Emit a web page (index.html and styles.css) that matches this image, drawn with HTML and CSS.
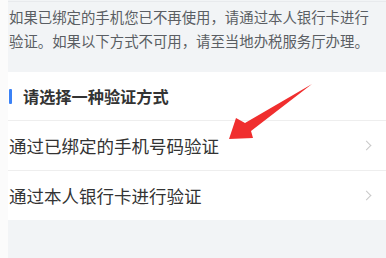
FILE: index.html
```html
<!DOCTYPE html>
<html lang="zh">
<head>
<meta charset="utf-8">
<link rel="stylesheet" href="styles.css">
</head>
<body>
<div class="page">
  <div class="notice">
    <p>如果已绑定的手机您已不再使用，请通过本人银行卡进行验证。如果以下方式不可用，请至当地办税服务厅办理。</p>
  </div>
  <div class="card">
    <div class="title"><span class="bar"></span><span>请选择一种验证方式</span></div>
    <div class="row"><span>通过已绑定的手机号码验证</span><span class="chev"></span></div>
    <div class="row"><span>通过本人银行卡进行验证</span><span class="chev"></span></div>
  </div>
  <div class="rest"></div>
</div>
<svg class="arrow" width="386" height="258" viewBox="0 0 386 258">
  <polygon points="229,139 236,118 245,123 312,84 251,131 253,138" fill="#f02e2e"/>
</svg>
</body>
</html>
```

FILE: styles.css
```css
html, body {
  margin: 0;
  padding: 0;
  background: #fbfbfb;
  font-family: "Noto Sans CJK SC", "Noto Sans", sans-serif;
}
.page {
  margin-left: 8px;
  padding-top: 1px;
  height: 257px;
  display: flex;
  flex-direction: column;
  background: #f2f4f6;
}
.notice {
  border-top: 1px solid #e8eaed;
  height: 70px;
}
.notice p {
  margin: 0;
  padding: 3px 16px 0 1px;
  font-size: 14.4px;
  line-height: 24px;
  color: #5a5e63;
  letter-spacing: 0;
}
.card {
  background: #fff;
}
.title {
  display: flex;
  align-items: center;
  height: 48px;
  border-bottom: 1px solid #eeeeee;
  font-size: 16.2px;
  font-weight: bold;
  color: #333;
}
.bar {
  width: 3px;
  height: 15px;
  margin: 0 11px 0 1px;
  border-radius: 1px;
  background: #3b82f6;
}
.row {
  display: flex;
  align-items: center;
  justify-content: space-between;
  height: 49px;
  padding-left: 1px;
  font-size: 17.5px;
  color: #333;
}
.row + .row {
  border-top: 1px solid #eeeeee;
}
.chev {
  width: 6px;
  height: 6px;
  margin-right: 16px;
  border-top: 1.3px solid #c9c9c9;
  border-right: 1.3px solid #c9c9c9;
  transform: rotate(45deg);
}
.rest {
  flex: 1;
}
.arrow {
  position: absolute;
  left: 0;
  top: 0;
}
```
